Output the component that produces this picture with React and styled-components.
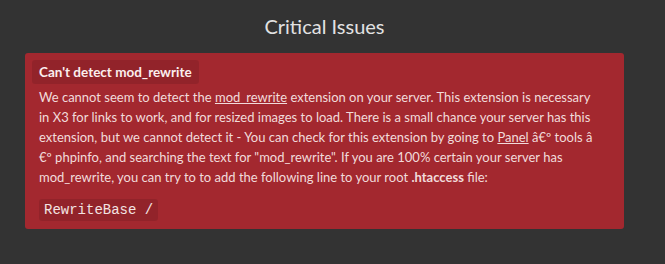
import React from "react";
import styled, { createGlobalStyle } from "styled-components";

const Global = createGlobalStyle`
  html, body { margin: 0; padding: 0; background: #333333; }
  body { font-family: Lato, "Noto Sans", sans-serif; }
`;

const Page = styled.div`
  width: 599px;
  margin-left: 25px;
`;

const Title = styled.h1`
  margin: 0;
  height: 53px;
  padding-top: 12px;
  box-sizing: border-box;
  text-align: center;
  font-size: 20px;
  line-height: 28px;
  font-weight: 400;
  color: #e2e2e2;
`;

const Alert = styled.div`
  background: #a3282f;
  border-radius: 3px;
  padding: 7px 7px 8px;
  color: #f1dbdb;
  font-size: 13px;
`;

const Label = styled.div`
  display: inline-block;
  background: rgba(0, 0, 0, 0.1);
  border-radius: 3px;
  padding: 0 7px;
  height: 24px;
  line-height: 24px;
  font-size: 13.5px;
  font-weight: 700;
  color: #fbeeee;
`;

const Body = styled.p`
  margin: 3px 20px 0 7px;
  line-height: 20px;
`;

const Link = styled.a`
  color: inherit;
  text-decoration: underline;
`;

const Code = styled.code`
  display: block;
  width: fit-content;
  margin: 12px 7px 0;
  padding: 0 5px;
  height: 22px;
  line-height: 22px;
  background: rgba(0, 0, 0, 0.1);
  border-radius: 3px;
  font-family: "Liberation Mono", monospace;
  font-size: 14px;
  color: #f3e3e3;
`;

export default function App() {
  return (
    <>
      <Global />
      <Page>
        <Title>Critical Issues</Title>
        <Alert>
          <Label>Can't detect mod_rewrite</Label>
          <Body>
            We cannot seem to detect the <Link>mod_rewrite</Link> extension on your server. This extension is necessary in X3 for links to work, and for resized images to load. There is a small chance your server has this extension, but we cannot detect it - You can check for this extension by going to <Link>Panel</Link> â€º tools â<wbr />€º phpinfo, and searching the text for "mod_rewrite". If you are 100% certain your server has mod_rewrite, you can try to to add the following line to your root <b>.htaccess</b> file:
          </Body>
          <Code>RewriteBase /</Code>
        </Alert>
      </Page>
    </>
  );
}
